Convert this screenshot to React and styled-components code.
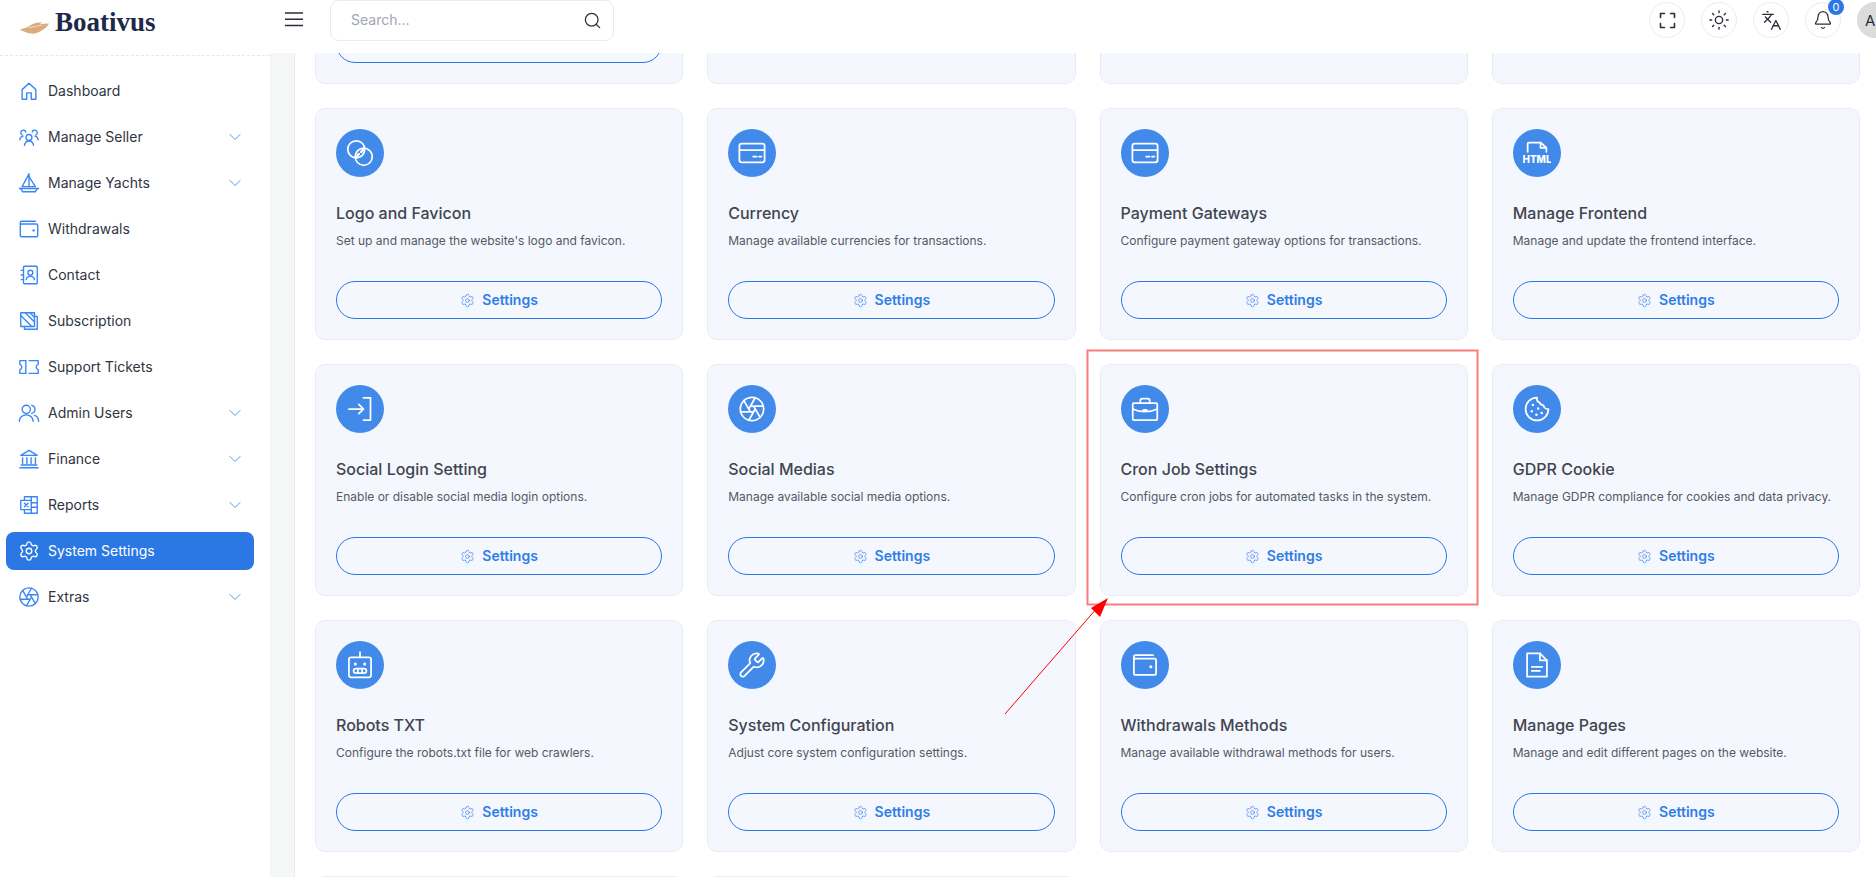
import React from 'react';
import styled, { createGlobalStyle } from 'styled-components';
import { Settings, Wrench, Sun, Languages, Bell, Search, ChevronDown } from 'lucide-react';

const Global = createGlobalStyle`
  html, body { margin: 0; padding: 0; height: 100%; overflow: hidden; background: #fff; }
  body { font-family: Inter, "Liberation Sans", sans-serif; }
  * { box-sizing: border-box; }
`;

const Page = styled.div`
  position: relative;
  display: flex;
  width: 1876px;
  height: 877px;
  overflow: hidden;
`;
const Sidebar = styled.aside`
  flex: 0 0 270px;
  background: #fff;
`;
const Brand = styled.div`
  display: flex;
  align-items: flex-start;
  gap: 6px;
  height: 56px;
  padding: 7px 0 0 20px;
  border-bottom: 1px dashed #e6e8ec;
`;
const BrandName = styled.span`
  font-family: "Liberation Serif", serif;
  font-weight: 700;
  font-size: 27px;
  line-height: 30px;
  color: #1d2948;
`;
const BoatMark = styled.svg`
  width: 29px;
  height: 15px;
  margin-top: 13px;
`;
const Nav = styled.nav`
  display: flex;
  flex-direction: column;
  gap: 8px;
  padding: 16px 16px 0 6px;
`;
const NavItem = styled.div`
  display: flex;
  align-items: center;
  gap: 8px;
  height: 38px;
  padding: 0 9px 0 12px;
  border-radius: 8px;
  font-size: 14px;
  color: ${p => (p.$active ? '#fff' : '#2f3542')};
  background: ${p => (p.$active ? '#2b78e4' : 'transparent')};
  & > svg:first-child { color: ${p => (p.$active ? '#fff' : '#3a86f5')}; flex: 0 0 22px; }
`;
const NavLabel = styled.span`
  flex: 1;
  padding-bottom: 2px;
`;
const NavChevron = styled(ChevronDown)`
  color: #5b95ee;
`;
const Main = styled.div`
  flex: 1;
  min-width: 0;
  display: flex;
  flex-direction: column;
`;
const TopBar = styled.header`
  flex: 0 0 53px;
  display: flex;
  align-items: flex-start;
  padding-left: 15px;
  background: #fff;
  position: relative;
  z-index: 2;
`;
const Burger = styled.svg`
  width: 18px;
  height: 16px;
  margin-top: 11px;
  color: #2a2f3a;
`;
const SearchBox = styled.div`
  display: flex;
  align-items: center;
  justify-content: space-between;
  width: 284px;
  height: 41px;
  margin-left: 27px;
  padding: 0 11px 0 20px;
  border: 1px solid #e9eaec;
  border-radius: 9px;
  font-size: 14px;
  color: #a0a5b0;
  & > svg { color: #2a2f3a; }
`;
const Placeholder = styled.span`
  padding-bottom: 2px;
`;
const Actions = styled.div`
  display: flex;
  align-items: flex-start;
  gap: 16px;
  margin-left: auto;
  margin-right: -17px;
  padding-top: 2px;
`;
const RoundButton = styled.div`
  position: relative;
  display: flex;
  align-items: center;
  justify-content: center;
  width: 36px;
  height: 36px;
  border: 1px solid #ebecee;
  border-radius: 50%;
  color: #2a2f3a;
`;
const Badge = styled.span`
  position: absolute;
  top: -4px;
  right: -4px;
  width: 16px;
  height: 16px;
  border-radius: 50%;
  background: #2b78e4;
  color: #fff;
  font-size: 11px;
  line-height: 16px;
  text-align: center;
`;
const Avatar = styled.div`
  display: flex;
  align-items: center;
  width: 36px;
  height: 36px;
  padding-left: 8px;
  border-radius: 50%;
  background: #dcdcdc;
  color: #2a2f3a;
  font-size: 15px;
`;
const Body = styled.div`
  flex: 1;
  min-height: 0;
  display: flex;
`;
const Gutter = styled.div`
  flex: 0 0 25px;
  background: #f5f6f6;
  border-right: 1px solid #e9eaec;
`;
const Content = styled.main`
  flex: 1;
  min-width: 0;
  overflow: hidden;
  padding: 0 16px 0 20px;
`;
const Grid = styled.div`
  display: grid;
  grid-template-columns: repeat(4, 1fr);
  grid-auto-rows: 232px;
  gap: 24px;
  margin-top: -201px;
`;
const Card = styled.section`
  display: flex;
  flex-direction: column;
  padding: 20px;
  background: #f4f7fe;
  border: 1px solid #e9edf3;
  border-radius: 10px;
`;
const IconCircle = styled.div`
  display: flex;
  align-items: center;
  justify-content: center;
  width: 48px;
  height: 48px;
  border-radius: 50%;
  background: #428ae9;
  color: #fff;
`;
const CardTitle = styled.h3`
  margin: 24px 0 0;
  font-size: 16px;
  line-height: 24px;
  font-weight: 500;
  color: #41454f;
`;
const CardText = styled.p`
  margin: 6px 0 0;
  font-size: 12px;
  line-height: 20px;
  color: #545964;
`;
const SettingsButton = styled.div`
  display: flex;
  align-items: center;
  justify-content: center;
  gap: 7px;
  height: 38px;
  margin-top: auto;
  border: 1px solid #2b78e4;
  border-radius: 19px;
  font-size: 14px;
  font-weight: 600;
  color: #2f7de6;
  & > svg { color: #5b95ee; }
`;
const ButtonLabel = styled.span`
  padding-bottom: 2px;
`;
const Annotation = styled.svg`
  position: absolute;
  inset: 0;
  width: 1876px;
  height: 877px;
  pointer-events: none;
  z-index: 1;
`;

const Ic = ({ size = 22, sw = 1.5, children }) => (
  <svg width={size} height={size} viewBox="0 0 24 24" fill="none" stroke="currentColor" strokeWidth={sw} strokeLinecap="round" strokeLinejoin="round">
    {children}
  </svg>
);

const House = p => <Ic {...p}><path d="M4.5 21V10.5L12 3.5l7.5 7V21h-5v-7h-5v7z" /></Ic>;
const UsersThree = p => <Ic {...p}><circle cx="12" cy="12.5" r="3.2" /><path d="M7 21c.6-3 2.6-4.6 5-4.6s4.4 1.600 5 4.600" /><path d="M8.500 6.500a2.800 2.800 0 1 0-4 3.300M2 15c.2-2.200 1.500-3.600 3.500-4" /><path d="M15.500 6.500a2.800 2.800 0 1 1 4 3.300M22 15c-.2-2.200-1.500-3.600-3.500-4" /></Ic>;
const Boat = p => <Ic {...p}><path d="M12 2v14H4.500z" /><path d="M12 5l7 11h-7" /><path d="M1.500 18h21" /><path d="M3 18l2 3.500h14l2-3.500" /></Ic>;
const Wallet = p => <Ic {...p}><path d="M2.500 7V5A1.500 1.500 0 0 1 4 3.500h15" /><rect x="2.500" y="6.500" width="19" height="14" rx="1.500" /><circle cx="17" cy="13.500" r=".6" /></Ic>;
const ContactBook = p => <Ic {...p}><rect x="6" y="2.500" width="15" height="19" rx="1" /><circle cx="13.500" cy="9.500" r="2.700" /><path d="M9 17c.4-2.300 2.200-3.500 4.500-3.500s4.100 1.200 4.500 3.500" /><path d="M3.500 7H6M3.500 12H6M3.500 17H6" /></Ic>;
const Subscription = p => <Ic {...p}><path d="M3 3h15v15H3z" /><path d="M3 6l12 12M8 3l10 10M13 3l5 5" /><path d="M18 7h3v14H7v-3" /></Ic>;
const Ticket = p => <Ic {...p}><path d="M2 5h6.500M12 5h10v4.200a2.900 2.900 0 0 0 0 5.600V19H12M8.500 19H2v-4.200a2.900 2.900 0 0 0 0-5.600V5" /><path d="M8.500 5v14" /></Ic>;
const UsersTwo = p => <Ic {...p}><circle cx="9" cy="8" r="4.500" /><path d="M1.500 21c0-4 3.200-7 7.500-7s7.500 3 7.500 7" /><path d="M15 3.600a4.500 4.500 0 0 1 0 8.800" /><path d="M18 14.500c2.700 1 4.500 3.400 4.500 6.500" /></Ic>;
const Bank = p => <Ic {...p}><path d="M12 2.500L3 8h18z" /><path d="M5 10.500v7M9.700 10.500v7M14.300 10.500v7M19 10.500v7" /><path d="M3.500 18.500h17M2 21.500h20" /></Ic>;
const ReportSheet = p => <Ic {...p}><path d="M7 7V3h14v18H7v-4" /><rect x="3" y="7" width="11.500" height="10" rx=".5" /><path d="M7 10l4 4M11 10l-4 4" /><path d="M14.500 9.500H21M14.500 14.500H21M14.500 3v4M14.500 17v4" /></Ic>;
const Linked = p => <Ic {...p}><circle cx="8.800" cy="8.800" r="7.300" /><circle cx="15.200" cy="15.200" r="7.300" /><path d="M9.500 14.500l1.500-1.500M13 11l1.500-1.500" strokeWidth="2.200" /></Ic>;
const CardIcon = p => <Ic {...p}><rect x="1.200" y="4" width="21.600" height="16" rx="2" /><path d="M1.200 9.500h21.600" /><path d="M13 15h3M18 15h2" /></Ic>;
const HtmlFile = p => (
  <Ic {...p}>
    <path d="M4 11V4A1 1 0 0 1 5 3h10l5 4.500V11" />
    <path d="M15 3v4.500h5" />
    <text x="12" y="20.500" textAnchor="middle" fontFamily="Inter, sans-serif" fontSize="8.500" fontWeight="800" fill="currentColor" stroke="none">HTML</text>
  </Ic>
);
const LoginIcon = p => <Ic {...p}><path d="M2.500 12h12.500M11 8l4 4-4 4" /><path d="M15 2.500h6v19h-6" /></Ic>;
const Briefcase = p => <Ic {...p}><rect x="1.500" y="7" width="21" height="14.500" rx="1" /><path d="M8 7V4.500A1.500 1.500 0 0 1 9.500 3h5A1.500 1.500 0 0 1 16 4.500V7" /><path d="M1.500 12c3.300 1.700 6.700 2.300 10.500 2.300s7.200-.6 10.500-2.300" /><path d="M10.800 13h2.400" strokeWidth="2" /></Ic>;
const Robot = p => <Ic {...p}><path d="M12 1V5.500" /><rect x="2.500" y="5.500" width="19" height="17" rx="2" /><path d="M8 11v.4M16 11v.4" strokeWidth="2.400" /><rect x="6.500" y="15" width="11" height="4" rx="2" /><path d="M10.200 15v4M13.800 15v4" /></Ic>;
const FileDoc = p => <Ic {...p}><path d="M3.500 2h11l6 6v14h-17z" /><path d="M14.500 2v6h6" /><path d="M7.500 13.500h9M7.500 17h7" /></Ic>;

const Cookie = p => (
  <Ic {...p}>
    <path d="M12 2.200a9.800 9.800 0 1 0 9.800 9.800 3.800 3.800 0 0 1-4.200-3.200 3.800 3.800 0 0 1-3.400-2.300 3.800 3.800 0 0 1-2.200-4.300z" />
    <path d="M8.500 8.500h.01M13 11.500h.01M7.500 14h.01M11.500 17h.01M16 15.500h.01" strokeWidth="2.200" />
  </Ic>
);

const shutter = [0, 1, 2, 3, 4, 5].map(k => {
  const v = a => [2.8 * Math.cos((a * Math.PI) / 3), 2.8 * Math.sin((a * Math.PI) / 3)];
  const [ax, ay] = v(k - 1);
  const [bx, by] = v(k);
  const dx = (bx - ax) / 2.8;
  const dy = (by - ay) / 2.8;
  const dot = ax * dx + ay * dy;
  const t = -dot + Math.sqrt(dot * dot + 100 - 7.84);
  return `M${(12 + ax).toFixed(2)} ${(12 + ay).toFixed(2)}L${(12 + ax + t * dx).toFixed(2)} ${(12 + ay + t * dy).toFixed(2)}`;
}).join('');

const Shutter = p => (
  <Ic {...p}>
    <circle cx="12" cy="12" r="10" />
    <path d={shutter} />
  </Ic>
);

const Fullscreen = () => (
  <Ic size={21} sw={1.8}>
    <path d="M4 8.500V4h4.500M15.500 4H20v4.500M20 15.500V20h-4.500M8.500 20H4v-4.500" />
  </Ic>
);

const nav = [
  ['Dashboard', House],
  ['Manage Seller', UsersThree, true],
  ['Manage Yachts', Boat, true],
  ['Withdrawals', Wallet],
  ['Contact', ContactBook],
  ['Subscription', Subscription],
  ['Support Tickets', Ticket],
  ['Admin Users', UsersTwo, true],
  ['Finance', Bank, true],
  ['Reports', ReportSheet, true],
  ['System Settings', p => <Settings size={22} strokeWidth={1.5} {...p} />, false, true],
  ['Extras', Shutter, true],
];

const LWrench = () => <Wrench size={28} strokeWidth={1.5} />;

const cards = [
  ['Logo and Favicon', "Set up and manage the website's logo and favicon.", Linked],
  ['Currency', 'Manage available currencies for transactions.', CardIcon],
  ['Payment Gateways', 'Configure payment gateway options for transactions.', CardIcon],
  ['Manage Frontend', 'Manage and update the frontend interface.', HtmlFile],
  ['Social Login Setting', 'Enable or disable social media login options.', LoginIcon],
  ['Social Medias', 'Manage available social media options.', Shutter],
  ['Cron Job Settings', 'Configure cron jobs for automated tasks in the system.', Briefcase],
  ['GDPR Cookie', 'Manage GDPR compliance for cookies and data privacy.', Cookie],
  ['Robots TXT', 'Configure the robots.txt file for web crawlers.', Robot],
  ['System Configuration', 'Adjust core system configuration settings.', LWrench],
  ['Withdrawals Methods', 'Manage available withdrawal methods for users.', Wallet],
  ['Manage Pages', 'Manage and edit different pages on the website.', FileDoc],
];

export default function App() {
  return (
    <Page>
      <Global />
      <Sidebar>
        <Brand>
          <BoatMark viewBox="0 0 29 15">
            <path d="M0 9.500C5 8 8 7.500 10 5.500 13 3 18 2 22 2.500l-2 1.500 9-.5c-1.500 3-4 5-8 7.500-3 2-7 3-10 2.500C7 13 3 11.500 0 9.500z" fill="#d9ab7f" />
            <path d="M9 7.500c4-.5 9-1.500 13-2.500" stroke="#f2dcc6" strokeWidth="1" fill="none" />
          </BoatMark>
          <BrandName>Boativus</BrandName>
        </Brand>
        <Nav>
          {nav.map(([label, Icon, chevron, active]) => (
            <NavItem key={label} $active={active}>
              <Icon />
              <NavLabel>{label}</NavLabel>
              {chevron && <NavChevron size={20} strokeWidth={1.2} />}
            </NavItem>
          ))}
        </Nav>
      </Sidebar>
      <Main>
        <TopBar>
          <Burger viewBox="0 0 18 16" fill="none" stroke="currentColor" strokeWidth="1.500">
            <path d="M0 2h18M0 8.300h18M0 14.500h18" />
          </Burger>
          <SearchBox>
            <Placeholder>Search...</Placeholder>
            <Search size={19} strokeWidth={1.6} />
          </SearchBox>
          <Actions>
            <RoundButton><Fullscreen /></RoundButton>
            <RoundButton><Sun size={22} strokeWidth={1.5} /></RoundButton>
            <RoundButton><Languages size={21} strokeWidth={1.5} /></RoundButton>
            <RoundButton>
              <Bell size={20} strokeWidth={1.5} />
              <Badge>0</Badge>
            </RoundButton>
            <Avatar>A</Avatar>
          </Actions>
        </TopBar>
        <Body>
          <Gutter />
          <Content>
            <Grid>
              <Card><SettingsButton /></Card>
              <Card />
              <Card />
              <Card />
              {cards.map(([title, text, Icon]) => (
                <Card key={title}>
                  <IconCircle><Icon size={28} /></IconCircle>
                  <CardTitle>{title}</CardTitle>
                  <CardText>{text}</CardText>
                  <SettingsButton>
                    <Settings size={15} strokeWidth={1.4} />
                    <ButtonLabel>Settings</ButtonLabel>
                  </SettingsButton>
                </Card>
              ))}
              <Card />
              <Card />
            </Grid>
          </Content>
        </Body>
      </Main>
      <Annotation viewBox="0 0 1876 877" fill="none">
        <rect x="1087.500" y="350.500" width="390" height="254" stroke="#f87c7c" strokeWidth="2" />
        <path d="M1005 714L1097 608" stroke="#f00" strokeWidth="1" />
        <path d="M1108 598L1091 608L1100 617z" fill="#f00" />
      </Annotation>
    </Page>
  );
}
